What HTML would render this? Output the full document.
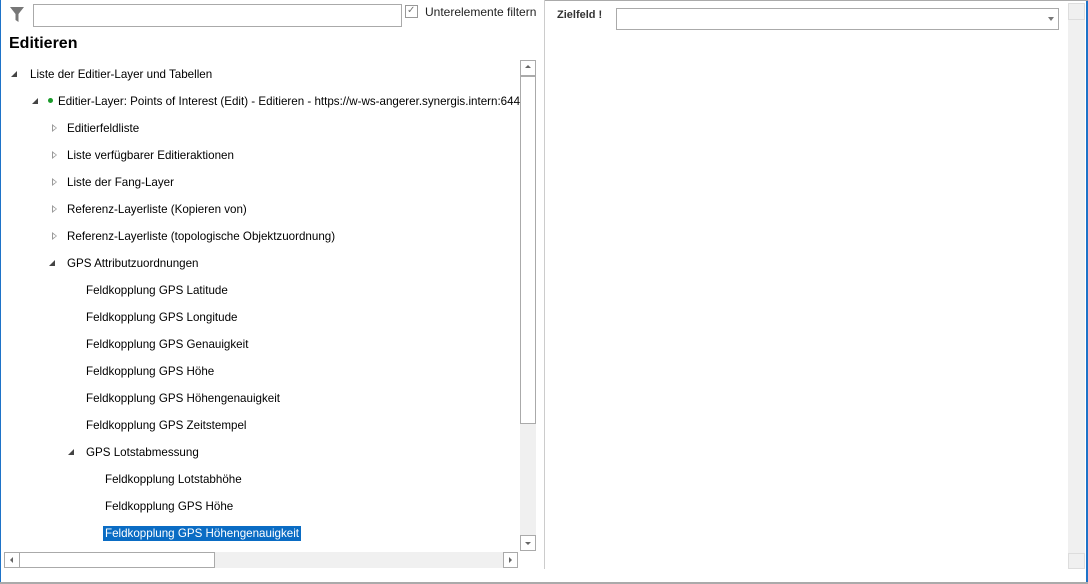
<!DOCTYPE html>
<html><head><meta charset="utf-8"><style>
*{margin:0;padding:0;box-sizing:border-box}
body{width:1088px;height:584px;position:relative;background:#fff;font-family:"Liberation Sans",sans-serif;font-size:11.6px;color:#000;overflow:hidden}
.a{position:absolute}
.t{position:absolute;white-space:nowrap;line-height:14px}
.tri{position:absolute;width:0;height:0}
.exp{border-left:6px solid transparent;border-bottom:6px solid #444}
.col{border-left:5px solid #999;border-top:4px solid transparent;border-bottom:4px solid transparent}
.col:after{content:"";position:absolute;left:-4px;top:-2px;border-left:3px solid #fff;border-top:2px solid transparent;border-bottom:2px solid transparent}
</style></head><body>
<div class="a" style="left:0;top:0;width:1px;height:584px;background:#1e73c8"></div>
<div class="a" style="right:0;top:0;width:2px;height:584px;background:#1e73c8"></div>
<div class="a" style="left:0;top:582px;width:1088px;height:2px;background:#aaa"></div>
<div class="a" style="left:544px;top:0;width:544px;height:1px;background:#aaa"></div>
<div class="a" style="left:544px;top:0;width:1px;height:569px;background:#ccc"></div>
<svg class="a" style="left:9px;top:6px" width="16" height="18" viewBox="0 0 16 18"><path d="M1 1H15L9.5 8V16L6.5 14V8Z" fill="#777"/></svg>
<div class="a" style="left:33px;top:4px;width:369px;height:23px;border:1px solid #aaa"></div>
<div class="a" style="left:405px;top:5px;width:13px;height:13px;border:1px solid #999"></div>
<div class="t" style="left:407px;top:4px;color:#777;font-size:10px">✓</div>
<div class="t" style="left:425px;top:5px;font-size:12px;color:#222">Unterelemente filtern</div>
<div class="t" style="left:9px;top:35px;font-size:16px;font-weight:bold;line-height:18px">Editieren</div>
<div class="tri exp" style="left:11px;top:71px"></div><div class="t" style="left:30px;top:68px">Liste der Editier-Layer und Tabellen</div>
<div class="tri exp" style="left:32px;top:98px"></div>
<div class="a" style="left:48px;top:98px;width:5px;height:5px;border-radius:50%;background:#1a9a2a"></div>
<div class="t" style="left:58px;top:95px">Editier-Layer: Points of Interest (Edit) - Editieren - https://w-ws-angerer.synergis.intern:644</div>
<div class="tri col" style="left:52px;top:124px"></div><div class="t" style="left:67px;top:122px">Editierfeldliste</div>
<div class="tri col" style="left:52px;top:151px"></div><div class="t" style="left:67px;top:149px">Liste verfügbarer Editieraktionen</div>
<div class="tri col" style="left:52px;top:178px"></div><div class="t" style="left:67px;top:176px">Liste der Fang-Layer</div>
<div class="tri col" style="left:52px;top:205px"></div><div class="t" style="left:67px;top:203px">Referenz-Layerliste (Kopieren von)</div>
<div class="tri col" style="left:52px;top:232px"></div><div class="t" style="left:67px;top:230px">Referenz-Layerliste (topologische Objektzuordnung)</div>
<div class="tri exp" style="left:49px;top:260px"></div><div class="t" style="left:67px;top:257px">GPS Attributzuordnungen</div>
<div class="t" style="left:86px;top:284px">Feldkopplung GPS Latitude</div>
<div class="t" style="left:86px;top:311px">Feldkopplung GPS Longitude</div>
<div class="t" style="left:86px;top:338px">Feldkopplung GPS Genauigkeit</div>
<div class="t" style="left:86px;top:365px">Feldkopplung GPS Höhe</div>
<div class="t" style="left:86px;top:392px">Feldkopplung GPS Höhengenauigkeit</div>
<div class="t" style="left:86px;top:419px">Feldkopplung GPS Zeitstempel</div>
<div class="tri exp" style="left:68px;top:449px"></div><div class="t" style="left:86px;top:446px">GPS Lotstabmessung</div>
<div class="t" style="left:105px;top:473px">Feldkopplung Lotstabhöhe</div>
<div class="t" style="left:105px;top:500px">Feldkopplung GPS Höhe</div>
<div class="t" style="left:103px;top:526px;background:#0a6cc4;color:#fff;padding:0 2px;line-height:15px">Feldkopplung GPS Höhengenauigkeit</div>
<div class="a" style="left:520px;top:60px;width:16px;height:491px;background:#f0f0f0"></div>
<div class="a" style="left:520px;top:60px;width:16px;height:16px;border:1px solid #aaa;background:#fff"></div>
<div class="tri" style="left:525px;top:65px;border-left:3px solid transparent;border-right:3px solid transparent;border-bottom:3px solid #666"></div>
<div class="a" style="left:520px;top:76px;width:16px;height:348px;border:1px solid #aaa;background:#fff"></div>
<div class="a" style="left:520px;top:535px;width:16px;height:16px;border:1px solid #aaa;background:#fff"></div>
<div class="tri" style="left:525px;top:542px;border-left:3px solid transparent;border-right:3px solid transparent;border-top:3px solid #666"></div>
<div class="a" style="left:4px;top:552px;width:514px;height:16px;background:#f0f0f0"></div>
<div class="a" style="left:4px;top:552px;width:16px;height:16px;border:1px solid #aaa;background:#fff"></div>
<div class="tri" style="left:10px;top:557px;border-top:3px solid transparent;border-bottom:3px solid transparent;border-right:3px solid #666"></div>
<div class="a" style="left:19px;top:552px;width:196px;height:16px;border:1px solid #aaa;background:#fff"></div>
<div class="a" style="left:503px;top:552px;width:15px;height:16px;border:1px solid #aaa;background:#fff"></div>
<div class="tri" style="left:509px;top:557px;border-top:3px solid transparent;border-bottom:3px solid transparent;border-left:3px solid #666"></div>
<div class="t" style="left:557px;top:8px;font-weight:bold;color:#333;font-size:11px">Zielfeld !</div>
<div class="a" style="left:616px;top:8px;width:443px;height:22px;border:1px solid #aaa;background:#fff"></div>
<div class="tri" style="left:1048px;top:17px;border-left:3px solid transparent;border-right:3px solid transparent;border-top:4px solid #777"></div>
<div class="a" style="left:1068px;top:3px;width:17px;height:565px;background:#f0f0f0"></div>
<div class="a" style="left:1068px;top:3px;width:17px;height:17px;border:1px solid #ddd"></div>
<div class="a" style="left:1068px;top:553px;width:17px;height:16px;border:1px solid #ddd"></div>
</body></html>
